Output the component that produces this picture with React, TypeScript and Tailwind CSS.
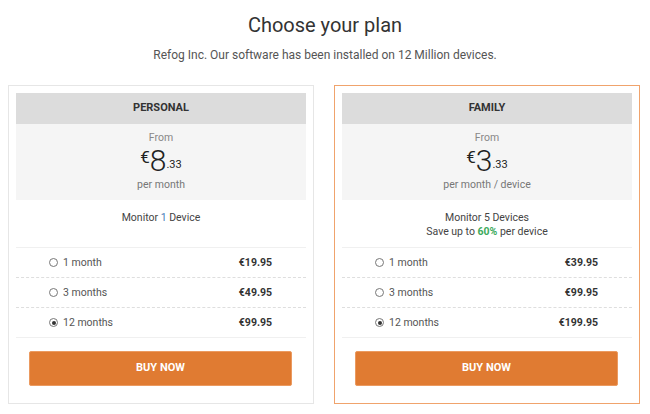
import React from "react"

type Option = { label: string; price: string; checked?: boolean }

type Plan = {
  name: string
  whole: string
  cents: string
  period: string
  highlighted?: boolean
  options: Option[]
}

const PLANS: Plan[] = [
  {
    name: "PERSONAL",
    whole: "8",
    cents: ".33",
    period: "per month",
    options: [
      { label: "1 month", price: "€19.95" },
      { label: "3 months", price: "€49.95" },
      { label: "12 months", price: "€99.95", checked: true },
    ],
  },
  {
    name: "FAMILY",
    whole: "3",
    cents: ".33",
    period: "per month / device",
    highlighted: true,
    options: [
      { label: "1 month", price: "€39.95" },
      { label: "3 months", price: "€99.95" },
      { label: "12 months", price: "€199.95", checked: true },
    ],
  },
]

const Radio = ({ checked }: { checked?: boolean }) => (
  <span className="w-[9px] h-[9px] rounded-full border border-[#777] flex items-center justify-center bg-white">
    {checked && <span className="w-[4px] h-[4px] rounded-full bg-[#333]" />}
  </span>
)

const PlanCard = ({ plan }: { plan: Plan }) => (
  <div
    className={`w-[306px] p-[7px] pb-[17px] bg-white border ${
      plan.highlighted ? "border-[#f0a36c]" : "border-[#e6e6e6]"
    }`}
  >
    <div className="h-[31px] bg-[#dcdcdc] flex items-center justify-center text-[11px] font-bold text-[#333]">
      {plan.name}
    </div>
    <div className="h-[76px] bg-[#f5f5f5] flex flex-col items-center pt-[7px]">
      <div className="text-[10.5px] leading-[14px] text-[#888]">From</div>
      <div className="flex items-start text-[#222]">
        <span className="text-[17px] leading-[18px] mt-[3px]">€</span>
        <span className="text-[30px] font-light leading-[31px]">{plan.whole}</span>
        <span className="text-[11px] leading-[13px] mt-[13px]">{plan.cents}</span>
      </div>
      <div className="text-[10.5px] leading-[14px] text-[#777] mt-[2px]">{plan.period}</div>
    </div>
    <div className="h-[47px] flex flex-col items-center pt-[11px] text-[10.5px] leading-[14px] text-[#444]">
      {plan.highlighted ? (
        <>
          <div>Monitor 5 Devices</div>
          <div>
            Save up to <span className="text-[#3daa5c] font-bold">60%</span> per device
          </div>
        </>
      ) : (
        <div>
          Monitor <span className="text-[#4a7ab8]">1</span> Device
        </div>
      )}
    </div>
    <div className="border-t border-[#f0f0f0]">
      {plan.options.map((o, i) => (
        <div
          key={o.label}
          className={`h-[30px] flex items-center justify-between pl-[33px] pr-[34px] ${
            i < plan.options.length - 1 ? "border-b border-dashed border-[#dedede]" : "border-b border-[#f0f0f0]"
          }`}
        >
          <div className="flex items-center gap-[5px] text-[10.5px] text-[#555]">
            <Radio checked={o.checked} />
            <span>{o.label}</span>
          </div>
          <div className="text-[10.5px] font-bold text-[#333]">{o.price}</div>
        </div>
      ))}
    </div>
    <div className="pl-[13px] pr-[14px] mt-[13px]">
      <button className="w-full h-[35px] bg-[#e07b32] border border-[#eb9a60] rounded-[2px] text-white text-[11px] font-bold">
        BUY NOW
      </button>
    </div>
  </div>
)

export default function App() {
  return (
    <div className="w-[650px] h-[414px] bg-white overflow-hidden font-['Roboto',sans-serif]">
      <div className="pt-[12px] text-center">
        <h1 className="text-[20px] leading-[26px] text-[#333]">Choose your plan</h1>
        <p className="mt-[9px] text-[12px] leading-[16px] text-[#555]">
          Refog Inc. Our software has been installed on 12 Million devices.
        </p>
      </div>
      <div className="mt-[22px] flex pl-[8px] gap-[20px]">
        {PLANS.map((p) => (
          <PlanCard key={p.name} plan={p} />
        ))}
      </div>
    </div>
  )
}
